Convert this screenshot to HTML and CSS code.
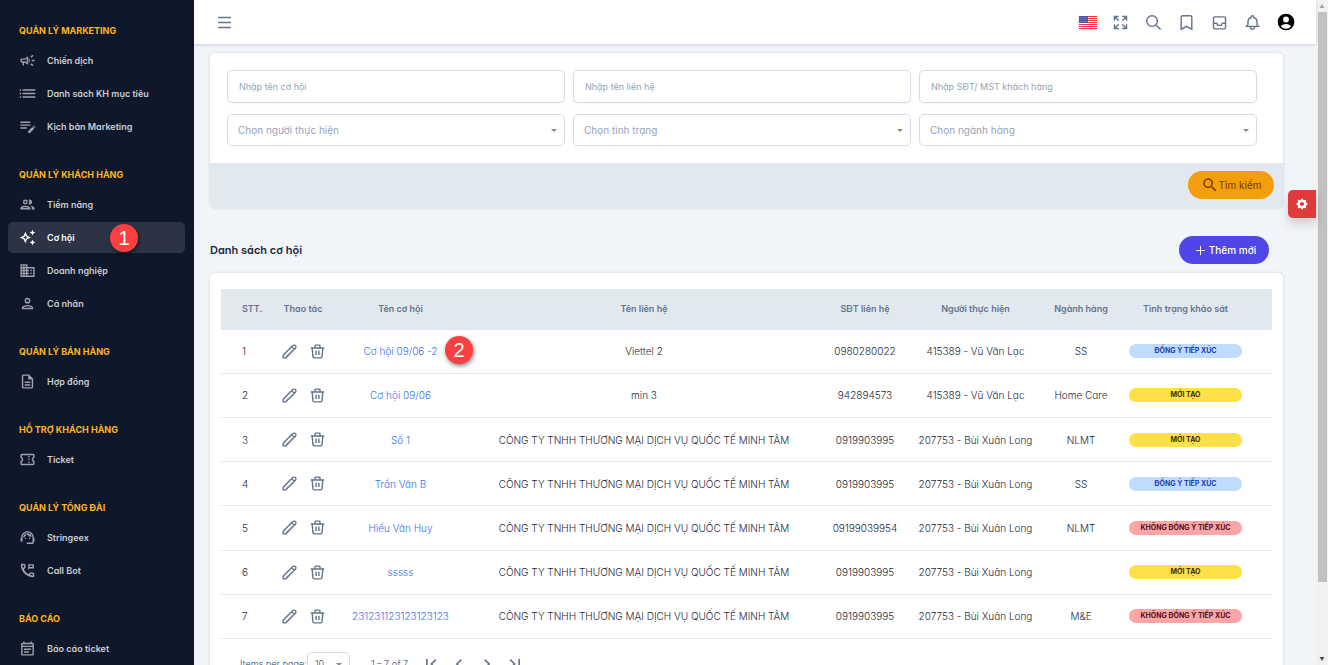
FILE: index.html
```html
<!DOCTYPE html>
<html lang="vi">
<head>
  <meta charset="UTF-8">
  <meta name="viewport" content="width=device-width, initial-scale=1.0">
  <title>Danh sách cơ hội</title>
  <link rel="stylesheet" href="styles.css">
</head>
<body>
  <!-- Icons -->
  <svg class="sprite" aria-hidden="true">
    <symbol id="campaign" viewBox="0 0 24 24"><path d="M18 11h4v2h-4zM16 17.6l3.200 2.400 1.200-1.600-3.200-2.400zM20.400 5.600 19.200 4 16 6.400 17.200 8zM4 9a2 2 0 0 0-2 2v2a2 2 0 0 0 2 2h1v4h2v-4h1l5 3V6L8 9zm5.030 1.710L11 9.530v4.940l-1.970-1.180-.480-.290H4v-2h4.550zM15.500 12a4.500 4.500 0 0 0-1.500-3.350v6.690A4.500 4.500 0 0 0 15.500 12z"/></symbol>
    <symbol id="list" viewBox="0 0 24 24"><path d="M1 11h2v2H1zM1 6h2v2H1zM1 16h2v2H1zM5 11h18v2H5zM5 6h18v2H5zM5 16h18v2H5z"/></symbol>
    <symbol id="note" viewBox="0 0 24 24"><path d="M2 5h14v2H2zM2 9h14v2H2zM2 13h9v2H2zM13 18.500V21h2.500l6-6-2.500-2.500zM20 11.500l2.500 2.500 1-1-2.500-2.500z"/></symbol>
    <symbol id="people" viewBox="0 0 24 24"><path d="M9 13.750c-2.340 0-7 1.170-7 3.500V19h14v-1.750c0-2.330-4.660-3.500-7-3.500zM4.340 17c.840-.580 2.870-1.250 4.660-1.250s3.820.670 4.660 1.250zM9 12a3.500 3.500 0 1 0 0-7 3.500 3.500 0 0 0 0 7zm0-5a1.500 1.500 0 1 1 0 3 1.500 1.500 0 0 1 0-3zm7.040 6.810c1.160.840 1.960 1.960 1.960 3.440V19h4v-1.750c0-2.020-3.500-3.170-5.960-3.440zM15 12a3.500 3.500 0 1 0-1.500-6.660 5.480 5.480 0 0 1 0 6.320c.460.220.970.340 1.500.340z"/></symbol>
    <symbol id="sparkle" viewBox="0 0 24 24"><path d="m19 9 1.250-2.750L23 5l-2.750-1.250L19 1l-1.250 2.750L15 5l2.750 1.250zM19 15l-1.250 2.750L15 19l2.750 1.250L19 23l1.250-2.750L23 19l-2.750-1.250zM11.500 9.500 9 4 6.500 9.500 1 12l5.500 2.500L9 20l2.500-5.500L17 12zM9.990 12.990 9 15.170l-.990-2.180L5.830 12l2.180-.990L9 8.830l.990 2.180 2.180.990z"/></symbol>
    <symbol id="business" viewBox="0 0 24 24"><path d="M12 7V3H2v18h20V7zM6 19H4v-2h2zm0-4H4v-2h2zm0-4H4V9h2zm0-4H4V5h2zm4 12H8v-2h2zm0-4H8v-2h2zm0-4H8V9h2zm0-4H8V5h2zm10 12h-8v-2h2v-2h-2v-2h2v-2h-2V9h8zm-2-8h-2v2h2zm0 4h-2v2h2z"/></symbol>
    <symbol id="person" viewBox="0 0 24 24"><path d="M12 6a2 2 0 1 1 0 4 2 2 0 0 1 0-4m0 10c2.700 0 5.800 1.290 6 2H6c.230-.720 3.310-2 6-2m0-12a4 4 0 1 0 0 8 4 4 0 0 0 0-8zm0 10c-2.670 0-8 1.340-8 4v2h16v-2c0-2.660-5.330-4-8-4z"/></symbol>
    <symbol id="contract" viewBox="0 0 24 24"><path d="M8 16h8v2H8zm0-4h8v2H8zm6-10H6a2 2 0 0 0-2 2v16a2 2 0 0 0 2 2h12a2 2 0 0 0 2-2V8zm4 18H6V4h7v5h5z"/></symbol>
    <symbol id="ticket" viewBox="0 0 24 24"><path d="M22 10V6a2 2 0 0 0-2-2H4a2 2 0 0 0-2 2v4a2 2 0 0 1 0 4v4c0 1.100.900 2 2 2h16a2 2 0 0 0 2-2v-4a2 2 0 0 1 0-4zm-2-1.460a4 4 0 0 0 0 6.920V18H4v-2.540a4 4 0 0 0 0-6.920V6h16zM13 15h2v2h-2zm0-4h2v2h-2zm0-4h2v2h-2z"/></symbol>
    <symbol id="agent" viewBox="0 0 24 24"><path d="M21 12.220C21 6.730 16.740 3 12 3c-4.690 0-9 3.650-9 9.280A2 2 0 0 0 2 14v2c0 1.100.900 2 2 2h1v-6.100a7 7 0 0 1 14 0V19h-8v2h8a2 2 0 0 0 2-2v-1.220c.590-.310 1-.920 1-1.640v-2.300c0-.700-.410-1.310-1-1.620z"/><circle cx="9" cy="13" r="1"/><circle cx="15" cy="13" r="1"/><path d="M18 11.030A6.040 6.040 0 0 0 12.050 6c-3.030 0-6.290 2.510-6.030 6.450a8.070 8.070 0 0 0 4.860-5.890c1.310 2.630 4 4.440 7.120 4.470z"/></symbol>
    <symbol id="call" viewBox="0 0 24 24"><path d="M13 11V3h8v6h-6zm2-4h4V5h-4zM20.500 21.500C10.500 21.500 2.500 13.500 2.500 3.500a1 1 0 0 1 1-1h4.200a1 1 0 0 1 1 .8l.8 4a1 1 0 0 1-.3.900L6.900 10.500c1.400 2.600 3.900 5.100 6.600 6.600l2.400-2.400a1 1 0 0 1 .9-.3l3.900.8a1 1 0 0 1 .8 1v4.300a1 1 0 0 1-1 1zM6 8.600l1.400-1.400-.6-2.700H4.600c.100 1.400.600 2.800 1.400 4.100zm9.500 9.400c1.200.5 2.600.9 4 1v-2.200l-2.600-.5z"/></symbol>
    <symbol id="event" viewBox="0 0 24 24"><path d="M19 4h-1V2h-2v2H8V2H6v2H5a2 2 0 0 0-2 2v14c0 1.100.900 2 2 2h14a2 2 0 0 0 2-2V6a2 2 0 0 0-2-2zm0 16H5V10h14zm0-12H5V6h14zM7 12h10v2H7zm0 4h7v2H7z"/></symbol>
    <symbol id="search" viewBox="0 0 24 24"><path d="M15.500 14h-.790l-.280-.270a6.500 6.500 0 1 0-.7.700l.270.280v.790l5 4.990L20.490 19zm-6 0a4.500 4.500 0 1 1 0-9 4.500 4.500 0 0 1 0 9z"/></symbol>
    <symbol id="pencil" viewBox="0 0 24 24"><path d="M15.200 5.200l3.600 3.600M16.700 3.700a2.500 2.500 0 1 1 3.600 3.600L6.500 21H3v-3.600z"/></symbol>
    <symbol id="trash" viewBox="0 0 24 24"><path d="M2.500 7h19M4.500 7l1 12a2 2 0 0 0 2 2h9a2 2 0 0 0 2-2l1-12M10 11v6M14 11v6M8.500 7V4a1 1 0 0 1 1-1h5a1 1 0 0 1 1 1v3"/></symbol>
  </svg>

  <div class="app">
    <!-- Sidebar -->
    <nav class="sidebar">
      <div class="group">
        <h2>QUẢN LÝ MARKETING</h2>
        <a href="#" class="item"><svg><use href="#campaign"/></svg>Chiến dịch</a>
        <a href="#" class="item"><svg><use href="#list"/></svg>Danh sách KH mục tiêu</a>
        <a href="#" class="item"><svg><use href="#note"/></svg>Kịch bản Marketing</a>
      </div>
      <div class="group">
        <h2>QUẢN LÝ KHÁCH HÀNG</h2>
        <a href="#" class="item"><svg><use href="#people"/></svg>Tiềm năng</a>
        <a href="#" class="item active"><svg><use href="#sparkle"/></svg>Cơ hội<span class="step step-menu">1</span></a>
        <a href="#" class="item"><svg><use href="#business"/></svg>Doanh nghiệp</a>
        <a href="#" class="item"><svg><use href="#person"/></svg>Cá nhân</a>
      </div>
      <div class="group">
        <h2>QUẢN LÝ BÁN HÀNG</h2>
        <a href="#" class="item"><svg><use href="#contract"/></svg>Hợp đồng</a>
      </div>
      <div class="group">
        <h2>HỖ TRỢ KHÁCH HÀNG</h2>
        <a href="#" class="item"><svg><use href="#ticket"/></svg>Ticket</a>
      </div>
      <div class="group">
        <h2>QUẢN LÝ TỔNG ĐÀI</h2>
        <a href="#" class="item"><svg><use href="#agent"/></svg>Stringeex</a>
        <a href="#" class="item"><svg><use href="#call"/></svg>Call Bot</a>
      </div>
      <div class="group">
        <h2>BÁO CÁO</h2>
        <a href="#" class="item"><svg><use href="#event"/></svg>Báo cáo ticket</a>
      </div>
    </nav>

    <div class="main">
      <!-- Header -->
      <header class="header">
        <button class="icon-btn" aria-label="Menu"><svg viewBox="0 0 24 24"><path d="M3 5h18M3 12h18M3 19h18"/></svg></button>
        <div class="tools">
          <button class="icon-btn" aria-label="Ngôn ngữ">
            <svg class="flag" viewBox="0 0 18 13">
              <path fill="#fff" d="M0 0h18v13H0z"/>
              <path fill="#f0323c" d="M0 0h18v1H0zM0 2h18v1H0zM0 4h18v1H0zM0 6h18v1H0zM0 8h18v1H0zM0 10h18v1H0zM0 12h18v1H0z"/>
              <path fill="#4a55a5" d="M0 0h9v7H0z"/>
              <path stroke="#b9bfe0" stroke-width=".6" stroke-dasharray=".7 .9" d="M1 1.500h7.500M1.800 3.500h6.500M1 5.500h7.500"/>
            </svg>
          </button>
          <button class="icon-btn" aria-label="Toàn màn hình"><svg viewBox="0 0 24 24"><path d="M9.500 9.500 4 4m-.5 5.500v-6h6M14.500 9.500 20 4m-5.500-.5h6v6M9.500 14.500 4 20m-.5-5.500v6h6M14.500 14.500 20 20m-5.500.5h6v-6"/></svg></button>
          <button class="icon-btn" aria-label="Tìm kiếm"><svg viewBox="0 0 24 24"><circle cx="10" cy="10" r="7.500"/><path d="m22 22-6.500-6.500"/></svg></button>
          <button class="icon-btn" aria-label="Đánh dấu"><svg viewBox="0 0 24 24"><path d="M4.500 4.500a2 2 0 0 1 2-2h11a2 2 0 0 1 2 2v17L12 17.500l-7.500 4z"/></svg></button>
          <button class="icon-btn" aria-label="Hộp thư"><svg viewBox="0 0 24 24"><rect x="3.500" y="4" width="17" height="17" rx="2"/><path d="M3.500 13H8l1.500 3h5l1.500-3h4.500"/></svg></button>
          <button class="icon-btn" aria-label="Thông báo"><svg viewBox="0 0 24 24"><path d="M15 17.500h5.500L19 15.800a2 2 0 0 1-.6-1.400V11A6.400 6.400 0 0 0 14 5V4.500a2 2 0 1 0-4 0V5a6.400 6.400 0 0 0-4.400 6v3.400A2 2 0 0 1 5 15.800l-1.500 1.700H9m6 0v.8a3 3 0 1 1-6 0v-.8m6 0H9"/></svg></button>
          <button class="icon-btn" aria-label="Tài khoản"><svg class="account" viewBox="0 0 24 24"><path d="M12 2a10 10 0 1 0 0 20 10 10 0 0 0 0-20zm0 3.500a3.500 3.500 0 1 1 0 7 3.500 3.500 0 0 1 0-7zM12 20a8 8 0 0 1-6-2.700c.8-1.700 3.300-2.800 6-2.800s5.200 1.100 6 2.800A8 8 0 0 1 12 20z"/></svg></button>
        </div>
      </header>

      <div class="content">
        <!-- Bộ lọc -->
        <form class="card filter">
          <div class="fields">
            <input type="text" placeholder="Nhập tên cơ hội" aria-label="Nhập tên cơ hội">
            <input type="text" placeholder="Nhập tên liên hệ" aria-label="Nhập tên liên hệ">
            <input type="text" placeholder="Nhập SĐT/ MST khách hàng" aria-label="Nhập SĐT/ MST khách hàng">
            <div class="select"><select aria-label="Chọn người thực hiện"><option>Chọn người thực hiện</option></select></div>
            <div class="select"><select aria-label="Chọn tình trạng"><option>Chọn tình trạng</option></select></div>
            <div class="select"><select aria-label="Chọn ngành hàng"><option>Chọn ngành hàng</option></select></div>
          </div>
          <div class="filter-footer">
            <button type="button" class="btn btn-search"><svg><use href="#search"/></svg>Tìm kiếm</button>
          </div>
        </form>

        <div class="title-row">
          <h1>Danh sách cơ hội</h1>
          <button class="btn btn-add"><svg viewBox="0 0 24 24"><path d="M12 2v20M2 12h20"/></svg>Thêm mới</button>
        </div>

        <!-- Danh sách -->
        <div class="card list">
          <table>
            <colgroup>
              <col class="c-no"><col class="c-action"><col class="c-name"><col><col class="c-phone"><col class="c-user"><col class="c-field"><col class="c-status">
            </colgroup>
            <thead>
              <tr><th class="no">STT.</th><th>Thao tác</th><th>Tên cơ hội</th><th>Tên liên hệ</th><th>SĐT liên hệ</th><th>Người thực hiện</th><th>Ngành hàng</th><th class="status">Tình trạng khảo sát</th></tr>
            </thead>
            <tbody>
              <tr>
                <td class="no">1</td>
                <td><div class="actions"><button aria-label="Sửa"><svg><use href="#pencil"/></svg></button><button aria-label="Xóa"><svg><use href="#trash"/></svg></button></div></td>
                <td class="name"><a href="#">Cơ hội 09/06 -2</a><span class="step step-row">2</span></td>
                <td>Viettel 2</td><td>0980280022</td><td>415389 - Vũ Văn Lạc</td><td>SS</td>
                <td class="status"><span class="tag blue">ĐỒNG Ý TIẾP XÚC</span></td>
              </tr>
              <tr>
                <td class="no">2</td>
                <td><div class="actions"><button aria-label="Sửa"><svg><use href="#pencil"/></svg></button><button aria-label="Xóa"><svg><use href="#trash"/></svg></button></div></td>
                <td class="name"><a href="#">Cơ hội 09/06</a></td>
                <td>min 3</td><td>942894573</td><td>415389 - Vũ Văn Lạc</td><td>Home Care</td>
                <td class="status"><span class="tag yellow">MỚI TẠO</span></td>
              </tr>
              <tr>
                <td class="no">3</td>
                <td><div class="actions"><button aria-label="Sửa"><svg><use href="#pencil"/></svg></button><button aria-label="Xóa"><svg><use href="#trash"/></svg></button></div></td>
                <td class="name"><a href="#">Số 1</a></td>
                <td>CÔNG TY TNHH THƯƠNG MẠI DỊCH VỤ QUỐC TẾ MINH TÂM</td><td>0919903995</td><td>207753 - Bùi Xuân Long</td><td>NLMT</td>
                <td class="status"><span class="tag yellow">MỚI TẠO</span></td>
              </tr>
              <tr>
                <td class="no">4</td>
                <td><div class="actions"><button aria-label="Sửa"><svg><use href="#pencil"/></svg></button><button aria-label="Xóa"><svg><use href="#trash"/></svg></button></div></td>
                <td class="name"><a href="#">Trần Văn B</a></td>
                <td>CÔNG TY TNHH THƯƠNG MẠI DỊCH VỤ QUỐC TẾ MINH TÂM</td><td>0919903995</td><td>207753 - Bùi Xuân Long</td><td>SS</td>
                <td class="status"><span class="tag blue">ĐỒNG Ý TIẾP XÚC</span></td>
              </tr>
              <tr>
                <td class="no">5</td>
                <td><div class="actions"><button aria-label="Sửa"><svg><use href="#pencil"/></svg></button><button aria-label="Xóa"><svg><use href="#trash"/></svg></button></div></td>
                <td class="name"><a href="#">Hiếu Văn Huy</a></td>
                <td>CÔNG TY TNHH THƯƠNG MẠI DỊCH VỤ QUỐC TẾ MINH TÂM</td><td>09199039954</td><td>207753 - Bùi Xuân Long</td><td>NLMT</td>
                <td class="status"><span class="tag red">KHÔNG ĐỒNG Ý TIẾP XÚC</span></td>
              </tr>
              <tr>
                <td class="no">6</td>
                <td><div class="actions"><button aria-label="Sửa"><svg><use href="#pencil"/></svg></button><button aria-label="Xóa"><svg><use href="#trash"/></svg></button></div></td>
                <td class="name"><a href="#">sssss</a></td>
                <td>CÔNG TY TNHH THƯƠNG MẠI DỊCH VỤ QUỐC TẾ MINH TÂM</td><td>0919903995</td><td>207753 - Bùi Xuân Long</td><td></td>
                <td class="status"><span class="tag yellow">MỚI TẠO</span></td>
              </tr>
              <tr>
                <td class="no">7</td>
                <td><div class="actions"><button aria-label="Sửa"><svg><use href="#pencil"/></svg></button><button aria-label="Xóa"><svg><use href="#trash"/></svg></button></div></td>
                <td class="name"><a href="#">231231123123123123</a></td>
                <td>CÔNG TY TNHH THƯƠNG MẠI DỊCH VỤ QUỐC TẾ MINH TÂM</td><td>0919903995</td><td>207753 - Bùi Xuân Long</td><td>M&amp;E</td>
                <td class="status"><span class="tag red">KHÔNG ĐỒNG Ý TIẾP XÚC</span></td>
              </tr>
            </tbody>
          </table>

          <div class="paginator">
            <label for="pageSize">Items per page:</label>
            <div class="select page-size"><select id="pageSize"><option>10</option></select></div>
            <span class="range">1 – 7 of 7</span>
            <button aria-label="First page"><svg viewBox="0 0 24 24"><path d="M18.400 16.600 13.800 12l4.600-4.600L17 6l-6 6 6 6zM6 6h2v12H6z"/></svg></button>
            <button aria-label="Previous page"><svg viewBox="0 0 24 24"><path d="M15.400 7.400 14 6l-6 6 6 6 1.400-1.400-4.600-4.600z"/></svg></button>
            <button aria-label="Next page"><svg viewBox="0 0 24 24"><path d="M10 6 8.600 7.400l4.600 4.600-4.600 4.600L10 18l6-6z"/></svg></button>
            <button aria-label="Last page"><svg viewBox="0 0 24 24"><path d="M5.600 7.400l4.600 4.600-4.600 4.600L7 18l6-6-6-6zM16 6h2v12h-2z"/></svg></button>
          </div>
        </div>
      </div>

      <button class="settings" aria-label="Cài đặt"><svg viewBox="0 0 20 20"><path fill-rule="evenodd" d="M11.490 3.170c-.380-1.560-2.600-1.560-2.980 0a1.530 1.530 0 0 1-2.290.950c-1.370-.840-2.940.730-2.100 2.100.540.890.060 2.040-.950 2.290-1.560.380-1.560 2.600 0 2.980a1.530 1.530 0 0 1 .950 2.290c-.840 1.370.730 2.940 2.100 2.100a1.530 1.530 0 0 1 2.290.950c.380 1.560 2.600 1.560 2.980 0a1.530 1.530 0 0 1 2.290-.950c1.370.840 2.940-.730 2.100-2.100a1.530 1.530 0 0 1 .950-2.290c1.560-.380 1.560-2.600 0-2.980a1.530 1.530 0 0 1-.950-2.290c.840-1.370-.730-2.940-2.100-2.100a1.530 1.530 0 0 1-2.290-.950zM10 13a3 3 0 1 0 0-6 3 3 0 0 0 0 6z"/></svg></button>
    </div>

    <!-- Thanh cuộn -->
    <div class="scrollbar">
      <svg viewBox="0 0 12 12"><path fill="#a3a3a3" d="M6 4 8.500 8h-5z"/></svg>
      <div class="track"><div class="thumb"></div></div>
      <svg viewBox="0 0 12 12"><path fill="#505050" d="M6 8l2.500-4h-5z"/></svg>
    </div>
  </div>
</body>
</html>
```

FILE: styles.css
```css
* {
  box-sizing: border-box;
}

body {
  margin: 0;
  font-family: Inter, "Noto Sans", sans-serif;
  font-feature-settings: "cv11";
  font-size: 10px;
  line-height: 16px;
  color: #1e293b;
  background-color: #f1f5f9;
}

button,
input,
select {
  font: inherit;
  font-feature-settings: inherit;
  color: inherit;
}

button {
  padding: 0;
  border: none;
  background: none;
  cursor: pointer;
}

a {
  text-decoration: none;
}

.sprite {
  display: none;
}

.app {
  display: flex;
  height: 100vh;
  overflow: hidden;
}

/* Sidebar */
.sidebar {
  flex: 0 0 194px;
  padding: 17px 9px 0 8px;
  overflow: hidden;
  background-color: #0f172a;
}

.group {
  margin-bottom: 19px;
}

.group h2 {
  margin: 0;
  padding-left: 11px;
  font-size: 9px;
  line-height: 27px;
  font-weight: 700;
  color: #fbb424;
}

.item {
  position: relative;
  display: flex;
  align-items: center;
  gap: 11px;
  height: 31px;
  margin: 1px 0 2px;
  padding-left: 11px;
  border-radius: 5px;
  font-size: 9px;
  font-weight: 600;
  color: #cbced4;
}

.item svg {
  width: 17px;
  height: 17px;
  fill: #9fa2aa;
}

.item.active {
  background-color: #2c3344;
  color: #fff;
}

.item.active svg {
  fill: #fff;
}

.step {
  position: absolute;
  width: 28px;
  height: 28px;
  border-radius: 50%;
  background-color: #fc3f41;
  box-shadow: 1px 2px 4px rgba(0, 0, 0, 0.5);
  font-family: "Liberation Sans", Arial, sans-serif;
  font-size: 20px;
  font-weight: 400;
  line-height: 28px;
  text-align: center;
  color: #fff;
}

.step-menu {
  left: 102px;
  top: 2px;
}

.step-row {
  right: -9px;
  top: 6px;
}

/* Header */
.main {
  position: relative;
  flex: 1;
  min-width: 0;
}

.header {
  position: relative;
  display: flex;
  justify-content: space-between;
  align-items: center;
  height: 44px;
  padding: 0 14px;
  background-color: #fff;
  box-shadow: 0 1px 3px rgba(0, 0, 0, 0.15);
}

.tools {
  display: flex;
}

.icon-btn {
  display: flex;
  justify-content: center;
  align-items: center;
  width: 33px;
  height: 33px;
}

.icon-btn svg {
  width: 17px;
  height: 17px;
  fill: none;
  stroke: #64748b;
  stroke-width: 2;
}

.icon-btn .flag {
  width: 18px;
  height: 13px;
  stroke: none;
  box-shadow: 0 1px 2px rgba(0, 0, 0, 0.2);
}

.icon-btn .account {
  width: 20px;
  height: 20px;
  fill: #000;
  stroke: none;
}

/* Filter */
.content {
  padding: 9px 33px 0 16px;
}

.card {
  border-radius: 5px;
  background-color: #fff;
  box-shadow: 0 0 3px rgba(15, 23, 42, 0.16);
}

.filter {
  overflow: hidden;
}

.fields {
  display: grid;
  grid-template-columns: repeat(3, 1fr);
  gap: 11px 8px;
  padding: 17px 26px 17px 17px;
}

.fields input,
.select select {
  width: 100%;
  height: 33px;
  padding: 0 11px;
  border: 1px solid #d3dce7;
  border-radius: 5px;
  background-color: #fff;
}

.fields input {
  font-size: 9px;
  box-shadow: 0 1px 2px rgba(0, 0, 0, 0.05);
}

.fields input::placeholder {
  color: #94a3b8;
}

.select {
  position: relative;
}

.select select {
  display: block;
  height: 32px;
  padding: 0 10px;
  appearance: none;
  color: #94a3b8;
}

.select::after {
  content: "";
  position: absolute;
  right: 8px;
  top: 50%;
  margin-top: -1px;
  border: 3px solid transparent;
  border-top-color: #8a8a8a;
  border-bottom: none;
}

.filter-footer {
  display: flex;
  justify-content: flex-end;
  padding: 8px 9px 9px;
  background-color: #e2e8f0;
}

.btn {
  display: flex;
  justify-content: center;
  align-items: center;
  height: 28px;
  border-radius: 14px;
}

.btn-search {
  width: 86px;
  background-color: #f59e0b;
  color: #78350f;
}

.btn-search svg {
  width: 18px;
  height: 18px;
  fill: #78350f;
}

.btn-add {
  gap: 3px;
  width: 90px;
  padding-left: 3px;
  background-color: #4f46e5;
  font-weight: 500;
  color: #fff;
}

.btn-add svg {
  width: 11px;
  height: 11px;
  stroke: #fff;
  stroke-width: 2;
}

.title-row {
  display: flex;
  justify-content: space-between;
  align-items: center;
  padding: 28px 14px 9px 0;
}

.title-row h1 {
  margin: 0;
  font-size: 11px;
  font-weight: 600;
}

/* Table */
.list {
  padding: 16px 11px 20px;
}

table {
  width: 100%;
  height: 350px;
  border-collapse: collapse;
  table-layout: fixed;
}

th,
td {
  height: 44px;
  padding: 0;
  border-bottom: 1px solid #e2e8f0;
  text-align: center;
  white-space: nowrap;
}

td {
  font-weight: 300;
}

th {
  height: 40px;
  background-color: #e2e8f0;
  font-size: 9px;
  font-weight: 600;
  color: #64748b;
}

.c-no { width: 48px; }
.c-action { width: 68px; }
.c-name { width: 127px; }
.c-phone { width: 82px; }
.c-user { width: 139px; }
.c-field { width: 72px; }
.c-status { width: 155px; }

th.no,
td.no {
  padding-left: 21px;
  text-align: left;
}

th.status,
td.status {
  padding-right: 18px;
}

.actions {
  display: flex;
  justify-content: center;
  gap: 11px;
}

.actions svg {
  display: block;
  width: 17px;
  height: 17px;
  fill: none;
  stroke: #64748b;
  stroke-width: 2;
  stroke-linejoin: round;
}

.name {
  position: relative;
}

.name a {
  color: #3b6ff0;
}

.tag {
  display: block;
  width: 113px;
  margin: 0 auto;
  border-radius: 7px;
  font-size: 7px;
  line-height: 14px;
  font-weight: 700;
}

.blue {
  background-color: #bfdbfe;
  color: #1e40af;
}

.yellow {
  background-color: #fde047;
  color: #422f06;
}

.red {
  background-color: #fca5a5;
  color: #4c0f1c;
}

/* Paginator */
.paginator {
  display: flex;
  align-items: center;
  padding: 13px 19px 0;
  font-size: 9px;
  color: #64748b;
}

.page-size {
  width: 43px;
  margin-right: 21px;
}

.page-size select {
  height: 23px;
  padding: 0 7px;
  color: #64748b;
}

.range {
  margin-right: 9px;
}

.paginator button {
  width: 28px;
  height: 20px;
}

.paginator svg {
  display: block;
  width: 20px;
  height: 20px;
  margin: 0 auto;
  fill: #64748b;
}

.settings {
  position: absolute;
  top: 190px;
  right: 0;
  display: flex;
  justify-content: center;
  align-items: center;
  width: 28px;
  height: 28px;
  border-radius: 5px 0 0 5px;
  background-color: #e03a3a;
  box-shadow: 0 6px 10px rgba(0, 0, 0, 0.15);
}

.settings svg {
  width: 14px;
  height: 14px;
  fill: #fff;
}

.scrollbar {
  display: flex;
  flex-direction: column;
  flex: 0 0 12px;
  background-color: #f1f1f1;
}

.scrollbar svg {
  width: 12px;
  height: 12px;
}

.track {
  flex: 1;
  padding: 0 1px 0 2px;
}

.thumb {
  height: 89%;
  background-color: #c1c1c1;
}
```
